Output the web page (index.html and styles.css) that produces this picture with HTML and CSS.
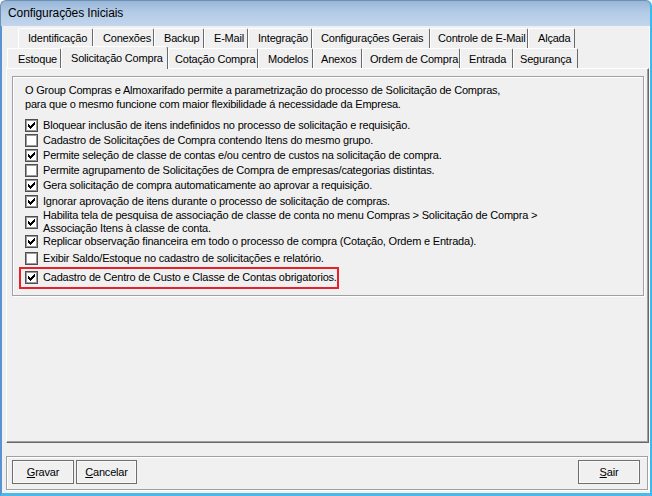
FILE: index.html
```html
<!DOCTYPE html>
<html lang="pt-BR">
<head>
<meta charset="utf-8">
<title>Configurações Iniciais</title>
<link rel="stylesheet" href="styles.css">
</head>
<body>
<div class="window">
  <div class="titlebar">Configurações Iniciais</div>
  <div class="body">
    <div class="tabs">
      <div class="tabrow back">
        <div class="tab">Identificação</div>
        <div class="tab">Conexões</div>
        <div class="tab">Backup</div>
        <div class="tab">E-Mail</div>
        <div class="tab">Integração</div>
        <div class="tab">Configurações Gerais</div>
        <div class="tab">Controle de E-Mail</div>
        <div class="tab">Alçada</div>
      </div>
      <div class="tabrow front">
        <div class="tab">Estoque</div>
        <div class="tab selected">Solicitação Compra</div>
        <div class="tab">Cotação Compra</div>
        <div class="tab">Modelos</div>
        <div class="tab">Anexos</div>
        <div class="tab">Ordem de Compra</div>
        <div class="tab">Entrada</div>
        <div class="tab">Segurança</div>
      </div>
    </div>
    <div class="panel">
      <div class="group">
        <p class="intro">O Group Compras e Almoxarifado permite a parametrização do processo de Solicitação de Compras,<br>para que o mesmo funcione com maior flexibilidade á necessidade da Empresa.</p>
        <label class="row r1"><span class="cb checked"></span><span class="txt">Bloquear inclusão de itens indefinidos no processo de solicitação e requisição.</span></label>
        <label class="row"><span class="cb"></span><span class="txt">Cadastro de Solicitações de Compra contendo Itens do mesmo grupo.</span></label>
        <label class="row"><span class="cb checked"></span><span class="txt">Permite seleção de classe de contas e/ou centro de custos na solicitação de compra.</span></label>
        <label class="row"><span class="cb"></span><span class="txt">Permite agrupamento de Solicitações de Compra de empresas/categorias distintas.</span></label>
        <label class="row"><span class="cb checked"></span><span class="txt">Gera solicitação de compra automaticamente ao aprovar a requisição.</span></label>
        <label class="row r6"><span class="cb checked"></span><span class="txt">Ignorar aprovação de itens durante o processo de solicitação de compras.</span></label>
        <label class="row two r7"><span class="cb checked"></span><span class="txt">Habilita tela de pesquisa de associação de classe de conta no menu Compras &gt; Solicitação de Compra &gt;<br>Associação Itens à classe de conta.</span></label>
        <label class="row r8"><span class="cb checked"></span><span class="txt">Replicar observação financeira em todo o processo de compra (Cotação, Ordem e Entrada).</span></label>
        <label class="row r9"><span class="cb"></span><span class="txt">Exibir Saldo/Estoque no cadastro de solicitações e relatório.</span></label>
        <div class="highlight">
          <label class="row"><span class="cb checked"></span><span class="txt">Cadastro de Centro de Custo e Classe de Contas obrigatorios.</span></label>
        </div>
      </div>
    </div>
    <div class="footer">
      <button class="btn b-gravar"><u>G</u>ravar</button>
      <button class="btn b-cancelar"><u>C</u>ancelar</button>
      <span class="spacer"></span>
      <button class="btn b-sair"><u>S</u>air</button>
    </div>
  </div>
</div>
</body>
</html>
```
FILE: styles.css
```css
* { box-sizing: border-box; margin: 0; padding: 0; }
html, body { width: 652px; height: 496px; overflow: hidden; background: #ffffff; }
body { font-family: "Liberation Sans", Arial, sans-serif; font-size: 11px; letter-spacing: -0.2px; color: #000; }

.window { width: 652px; height: 496px; display: flex; flex-direction: column; }

.titlebar {
  height: 26px;
  flex: none;
  background: linear-gradient(to bottom, #98b6d8 0%, #b3cbe6 45%, #c2d6ec 100%);
  border: 1px solid #6f8fb3;
  border-bottom: none;
  border-right: 2px solid #3ab9ec;
  border-radius: 6px 6px 0 0;
  padding-left: 7px;
  line-height: 25px;
  font-size: 12px;
  letter-spacing: -0.1px;
  color: #000;
}

.body {
  flex: 1;
  display: flex;
  flex-direction: column;
  background: #f0f0f0;
  border-left: 2px solid #5b93d2;
  border-right: 2px solid #3ab9ec;
  border-bottom: 3px solid #4cb9e6;
  box-shadow: inset -1px 0 0 #ffffff;
}

.tabs { height: 40px; margin-top: 2px; flex: none; }
.tabrow { display: flex; height: 20px; align-items: flex-end; }
.tabrow.back { margin-left: 16px; }
.tabrow.front { margin-left: 5px; }

.tab {
  height: 20px;
  border-top: 1px solid #ffffff;
  border-left: 1px solid #ffffff;
  border-right: 1px solid #6a6a6a;
  border-radius: 2px 2px 0 0;
  padding-left: 9px;
  line-height: 19px;
  white-space: nowrap;
  background: #f0f0f0;
}
.tabrow.front .tab { line-height: 21px; }

.back .tab:nth-child(1) { width: 75px; }
.back .tab:nth-child(2) { width: 61px; }
.back .tab:nth-child(3) { width: 50px; }
.back .tab:nth-child(4) { width: 44px; }
.back .tab:nth-child(5) { width: 64px; }
.back .tab:nth-child(6) { width: 118px; padding-left: 8px; }
.back .tab:nth-child(7) { width: 98px; padding-left: 7px; }
.back .tab:nth-child(8) { width: 47px; }

.front .tab:nth-child(1) { width: 54px; padding-left: 10px; }
.front .tab:nth-child(2) { width: 107px; }
.front .tab:nth-child(3) { width: 90px; padding-left: 6px; }
.front .tab:nth-child(4) { width: 55px; }
.front .tab:nth-child(5) { width: 49px; padding-left: 7px; }
.front .tab:nth-child(6) { width: 98px; padding-left: 7px; }
.front .tab:nth-child(7) { width: 53px; padding-left: 8px; }
.front .tab:nth-child(8) { width: 65px; padding-left: 6px; }

.front .tab.selected {
  height: 23px;
  margin-bottom: -1px;
  position: relative;
  z-index: 2;
  padding-left: 9px;
  line-height: 22px;
  border-radius: 3px 3px 0 0;
}

.panel {
  height: 375px;
  flex: none;
  margin-left: 4px;
  margin-right: 1px;
  border-top: 1px solid #ffffff;
  border-left: 1px solid #ffffff;
  border-right: 1px solid #696969;
  border-bottom: 1px solid #696969;
  box-shadow: inset -1px -1px 0 #a0a0a0;
  padding: 7px 4px 0 5px;
}

.group {
  height: 220px;
  border: 1px solid #a0a0a0;
  box-shadow: inset 1px 1px 0 #ffffff, 1px 1px 0 #ffffff;
  padding: 6px 0 0 12px;
  display: flex;
  flex-direction: column;
  align-items: flex-start;
}

.intro { line-height: 14px; white-space: nowrap; }

.row {
  display: flex;
  align-items: center;
  gap: 5px;
  height: 13px;
  line-height: 13px;
  margin-top: 2px;
  white-space: nowrap;
}
.row.r1 { margin-top: 8px; }
.row.r6 { margin-top: 3px; }
.row.r7 { margin-top: 1px; height: 26px; }
.row.r8 { margin-top: 0; }
.row.r9 { margin-top: 4px; }

.cb {
  width: 13px;
  height: 13px;
  flex: none;
  background: #ffffff;
  border: 1px solid #4e4e4e;
  box-shadow: inset 0 0 0 1px #9a9a9a;
  position: relative;
}
.cb.checked::after {
  content: "";
  position: absolute;
  left: 2px;
  top: 2px;
  width: 7px;
  height: 7px;
  background:
    linear-gradient(#000, #000) 0 2px / 1px 3px no-repeat,
    linear-gradient(#000, #000) 1px 3px / 1px 3px no-repeat,
    linear-gradient(#000, #000) 2px 4px / 1px 3px no-repeat,
    linear-gradient(#000, #000) 3px 3px / 1px 3px no-repeat,
    linear-gradient(#000, #000) 4px 2px / 1px 3px no-repeat,
    linear-gradient(#000, #000) 5px 1px / 1px 3px no-repeat,
    linear-gradient(#000, #000) 6px 0 / 1px 3px no-repeat;
}

.highlight {
  margin-top: 2px;
  margin-left: -6px;
  border: 2px solid #e8202a;
  padding: 2px 0 3px 4px;
}
.highlight .row { margin-top: 0; }

.footer {
  margin-top: 13px;
  margin-left: 4px;
  margin-right: 2px;
  height: 34px;
  border: 1px solid #a0a0a0;
  box-shadow: inset 1px 1px 0 #ffffff, 1px 1px 0 #ffffff;
  display: flex;
  align-items: flex-start;
  padding: 3px 7px 0 5px;
  gap: 1px;
}
.spacer { flex: 1; }

.btn {
  height: 24px;
  font-family: "Liberation Sans", Arial, sans-serif;
  font-size: 11px;
  letter-spacing: -0.2px;
  color: #000;
  background: #f0f0f0;
  border: 1px solid #6e6e6e;
  box-shadow: inset 0 0 0 1px #fafafa;
  padding: 0;
}
.btn u { text-decoration: underline; }
.b-gravar { width: 62px; }
.b-cancelar { width: 61px; margin-left: 1px; }
.b-sair { width: 62px; }
```
